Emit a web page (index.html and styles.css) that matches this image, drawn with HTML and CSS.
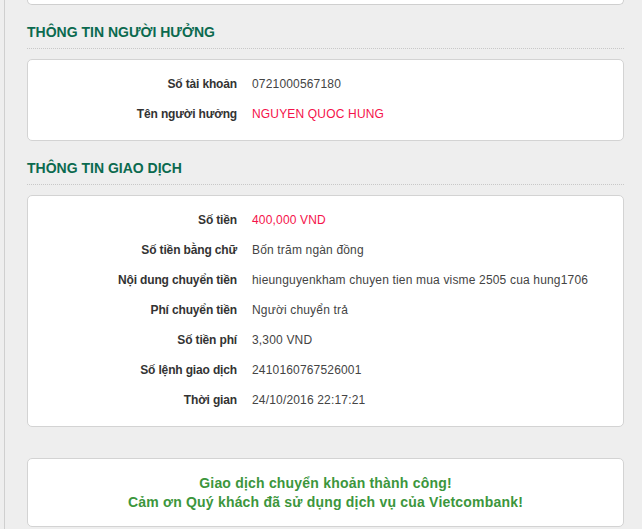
FILE: index.html
```html
<!DOCTYPE html>
<html lang="vi">
<head>
    <meta charset="UTF-8">
    <title>Kết quả chuyển khoản</title>
    <link rel="stylesheet" href="styles.css">
</head>
<body>
    <div class="main">
        <div class="card-tail"></div>

        <h3 class="section-title">THÔNG TIN NGƯỜI HƯỞNG</h3>
        <div class="card">
            <div class="info-row">
                <div class="label">Số tài khoản</div>
                <div class="value">0721000567180</div>
            </div>
            <div class="info-row">
                <div class="label">Tên người hưởng</div>
                <div class="value red">NGUYEN QUOC HUNG</div>
            </div>
        </div>

        <h3 class="section-title">THÔNG TIN GIAO DỊCH</h3>
        <div class="card">
            <div class="info-row">
                <div class="label">Số tiền</div>
                <div class="value red">400,000 VND</div>
            </div>
            <div class="info-row">
                <div class="label">Số tiền bằng chữ</div>
                <div class="value">Bốn trăm ngàn đồng</div>
            </div>
            <div class="info-row">
                <div class="label">Nội dung chuyển tiền</div>
                <div class="value">hieunguyenkham chuyen tien mua visme 2505 cua hung1706</div>
            </div>
            <div class="info-row">
                <div class="label">Phí chuyển tiền</div>
                <div class="value">Người chuyển trả</div>
            </div>
            <div class="info-row">
                <div class="label">Số tiền phí</div>
                <div class="value">3,300 VND</div>
            </div>
            <div class="info-row">
                <div class="label">Số lệnh giao dịch</div>
                <div class="value">2410160767526001</div>
            </div>
            <div class="info-row">
                <div class="label">Thời gian</div>
                <div class="value">24/10/2016 22:17:21</div>
            </div>
        </div>

        <div class="card message">
            Giao dịch chuyển khoản thành công!<br>
            Cảm ơn Quý khách đã sử dụng dịch vụ của Vietcombank!
        </div>
    </div>
</body>
</html>
```

FILE: styles.css
```css
html, body {
    margin: 0;
    padding: 0;
    background-color: #eeeeee;
}
body {
    font-family: Arial, "Liberation Sans", sans-serif;
    font-size: 12px;
    color: #333;
    padding-left: 4px;
}
.main {
    border-left: 1px solid #cfcfcf;
    padding: 0 18px 0 22px;
    min-height: 529px;
    box-sizing: border-box;
}
.card-tail {
    height: 4px;
    background: white;
    border: 1px solid #cfcfcf;
    border-top: none;
    border-radius: 0 0 5px 5px;
}
.card {
    background: white;
    border: 1px solid #d3d3d3;
    border-radius: 5px;
}
.section-title {
    margin: 19px 0 10px;
    padding-bottom: 8px;
    border-bottom: 1px dotted #c8c8c8;
    font-size: 14px;
    line-height: 16px;
    font-weight: bold;
    color: #0b6a4f;
}
.card:not(.message) {
    padding: 9px 0 11px;
}
.info-row {
    display: grid;
    grid-template-columns: 209px 1fr;
    column-gap: 15px;
    line-height: 30px;
}
.label {
    text-align: right;
    font-weight: bold;
    color: #333;
    letter-spacing: -0.15px;
}
.value {
    color: #444;
    letter-spacing: 0.17px;
}
.value.red {
    color: #f5124a;
}
.message {
    margin-top: 31px;
    padding: 15px 0 14px;
    text-align: center;
    font-size: 14px;
    line-height: 19px;
    font-weight: bold;
    color: #3c963c;
    letter-spacing: 0.2px;
}
```
